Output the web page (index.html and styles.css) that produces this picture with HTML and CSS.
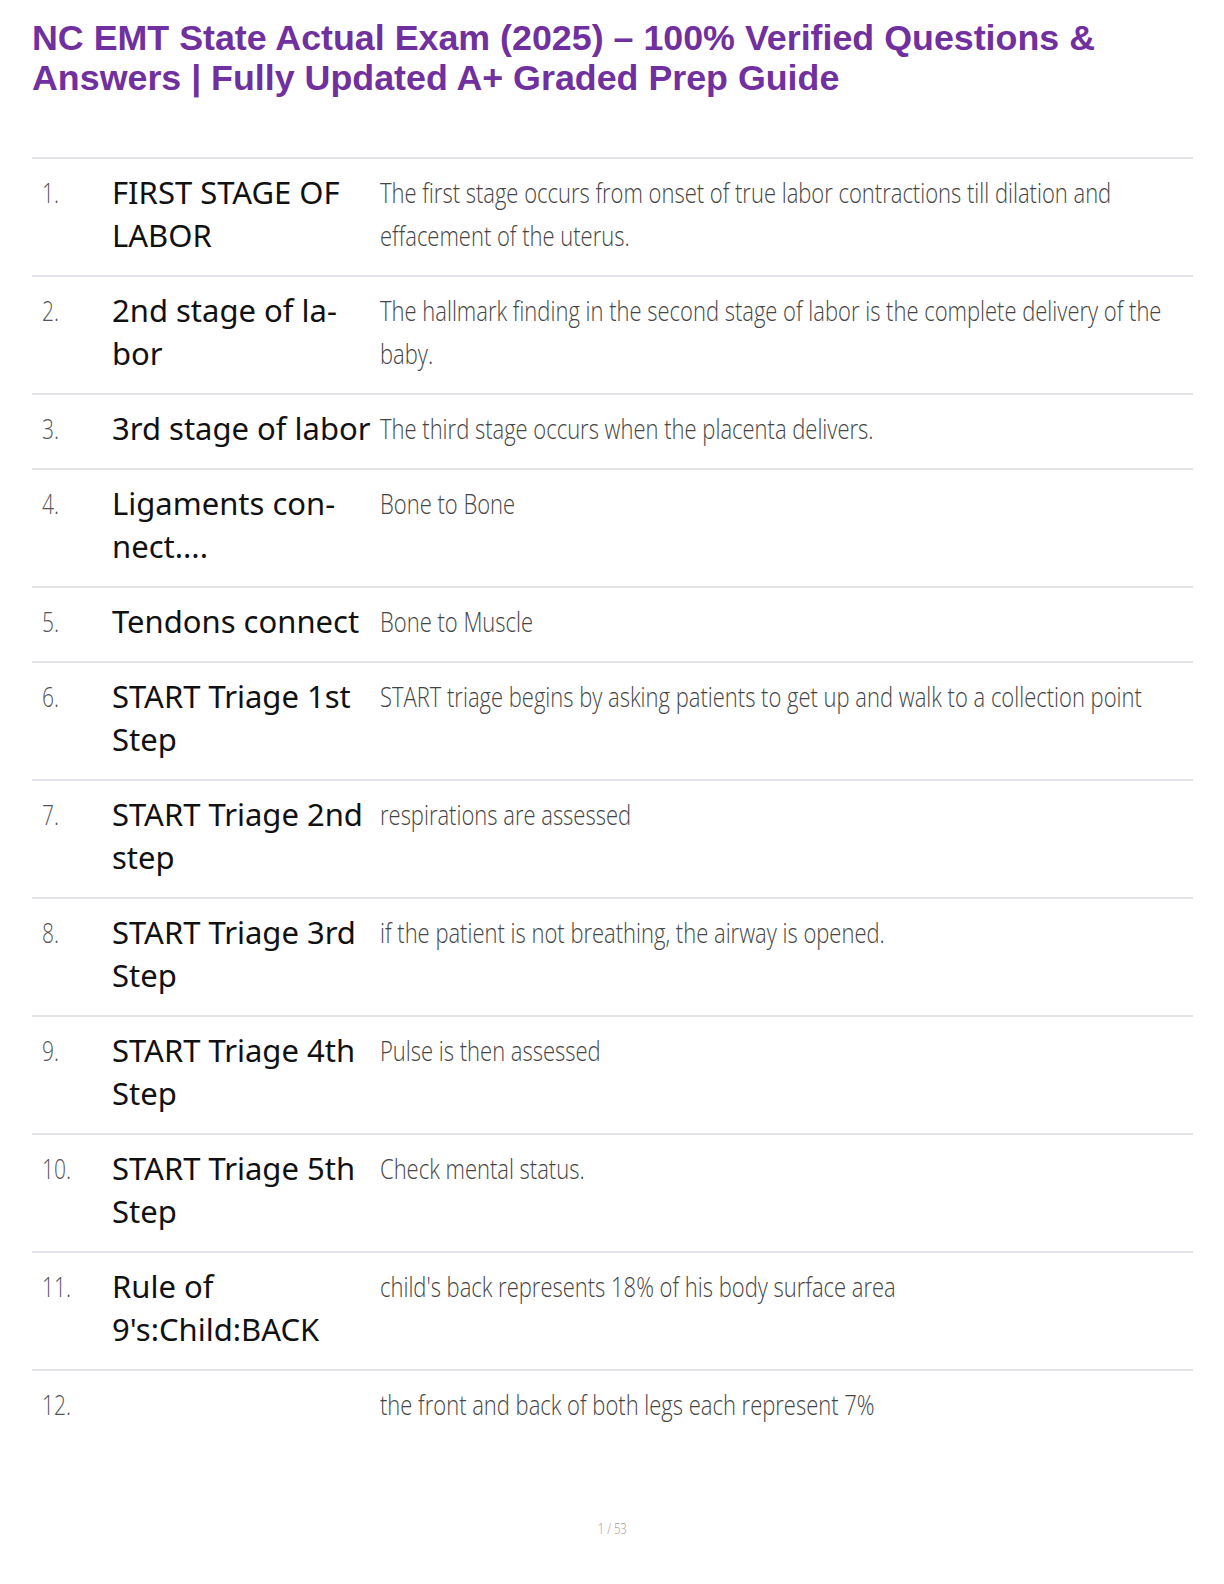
FILE: index.html
```html
<!DOCTYPE html>
<html>
<head>
<meta charset="utf-8">
<link rel="stylesheet" href="styles.css">
</head>
<body>
<div class="page">
  <h1 class="title">NC EMT State Actual Exam (2025) – 100% Verified Questions &amp; Answers | Fully Updated A+ Graded Prep Guide</h1>
  <div class="list">
    <div class="row"><div class="num"><span class="cond">1.</span></div><div class="term">FIRST STAGE OF LABOR</div><div class="ans"><span class="cond">The first stage occurs from onset of true labor contractions till dilation and effacement of the uterus.</span></div></div>
    <div class="row"><div class="num"><span class="cond">2.</span></div><div class="term">2nd stage of la-<br>bor</div><div class="ans"><span class="cond">The hallmark finding in the second stage of labor is the complete delivery of the baby.</span></div></div>
    <div class="row"><div class="num"><span class="cond">3.</span></div><div class="term">3rd stage of labor</div><div class="ans"><span class="cond">The third stage occurs when the placenta delivers.</span></div></div>
    <div class="row"><div class="num"><span class="cond">4.</span></div><div class="term">Ligaments con-<br>nect....</div><div class="ans"><span class="cond">Bone to Bone</span></div></div>
    <div class="row"><div class="num"><span class="cond">5.</span></div><div class="term">Tendons connect</div><div class="ans"><span class="cond">Bone to Muscle</span></div></div>
    <div class="row"><div class="num"><span class="cond">6.</span></div><div class="term">START Triage 1st Step</div><div class="ans"><span class="cond">START triage begins by asking patients to get up and walk to a collection point</span></div></div>
    <div class="row"><div class="num"><span class="cond">7.</span></div><div class="term">START Triage 2nd step</div><div class="ans"><span class="cond">respirations are assessed</span></div></div>
    <div class="row"><div class="num"><span class="cond">8.</span></div><div class="term">START Triage 3rd Step</div><div class="ans"><span class="cond">if the patient is not breathing, the airway is opened.</span></div></div>
    <div class="row"><div class="num"><span class="cond">9.</span></div><div class="term">START Triage 4th Step</div><div class="ans"><span class="cond">Pulse is then assessed</span></div></div>
    <div class="row"><div class="num"><span class="cond">10.</span></div><div class="term">START Triage 5th Step</div><div class="ans"><span class="cond">Check mental status.</span></div></div>
    <div class="row"><div class="num"><span class="cond">11.</span></div><div class="term">Rule of<br>9's:Child:BACK</div><div class="ans"><span class="cond">child's back represents 18% of his body surface area</span></div></div>
    <div class="row last"><div class="num"><span class="cond">12.</span></div><div class="term"></div><div class="ans"><span class="cond">the front and back of both legs each represent 7%</span></div></div>
  </div>
  <div class="footer"><span class="pg">1 / 53</span></div>
</div>
</body>
</html>
```
FILE: styles.css
```css
html, body {
  margin: 0;
  padding: 0;
  background: #ffffff;
}
.page {
  width: 1224px;
  height: 1584px;
  box-sizing: border-box;
  padding: 18px 31px 0 32px;
  display: flex;
  flex-direction: column;
}
.title {
  margin: 0;
  font-family: "Liberation Sans", Arial, sans-serif;
  font-weight: bold;
  font-size: 35.8px;
  line-height: 40px;
  color: #7030a0;
}
.list {
  margin-top: 59px;
  border-top: 2px solid #e3e3e8;
}
.row {
  display: grid;
  grid-template-columns: 80px 268px 1fr;
  border-bottom: 2px solid #e3e3e8;
  padding: 12px 0 18px;
  min-height: 43px;
}
.row.last {
  border-bottom: none;
}
.num {
  padding-left: 10px;
  font-family: "Open Sans", sans-serif;
  font-weight: 300;
  font-size: 28px;
  line-height: 43px;
  color: #555;
  overflow: hidden;
}
.term {
  font-family: "Noto Sans", "Open Sans", sans-serif;
  font-size: 31px;
  line-height: 43px;
  color: #111;
  padding-right: 4px;
}
.ans {
  font-family: "Open Sans", sans-serif;
  font-weight: 300;
  font-size: 28px;
  line-height: 43px;
  color: #444;
  overflow: hidden;
}
.cond {
  display: block;
  width: 127.4%;
  transform: scaleX(0.785);
  transform-origin: left top;
}
.num .cond {
  width: 200%;
  transform: scaleX(0.75);
}
.footer {
  margin-top: auto;
  height: 66px;
  text-align: center;
}
.pg {
  font-family: "Open Sans", sans-serif;
  font-weight: 300;
  font-size: 15px;
  color: #999;
  display: inline-block;
  transform: scaleX(0.75);
}
```
